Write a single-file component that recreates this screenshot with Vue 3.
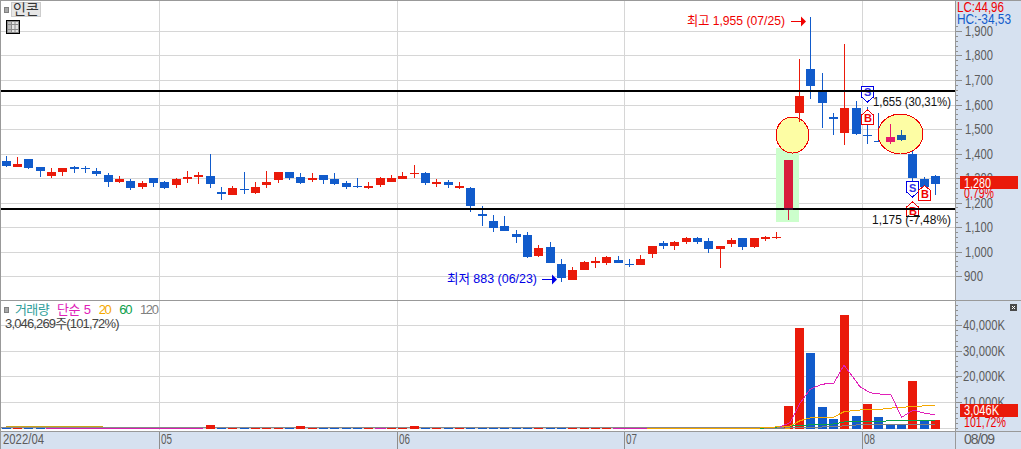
<script setup>
const B = '#115bcb'
const R = '#ea1a0a'
// each candle: wick top, wick bottom, body top, body bottom (px), colour
const raw = [
  [156,167,161,166,B],[157,167,164,167,R],[159,169,159,168,B],[167,177,167,171,B],[168,178,172,176,R],
  [168,176,168,172,R],[166,173,167,169,B],[166,173,168,169,B],[168,176,171,174,B],[173,187,175,182,B],
  [176,183,179,182,R],[179,190,181,188,B],[181,189,183,187,R],[178,187,178,183,B],[181,189,182,188,B],
  [178,188,179,185,R],[171,183,177,179,R],[172,184,175,177,R],[154,188,176,184,B],[187,200,192,194,B],
  [186,195,188,195,R],[172,194,189,190,B],[182,194,187,193,R],[171,188,182,185,R],[172,183,172,180,R],
  [172,180,172,178,B],[173,184,177,183,B],[173,182,178,180,R],[175,184,175,180,B],[173,185,179,184,B],
  [181,189,183,187,B],[178,188,186,187,B],[182,189,186,188,R],[177,187,178,185,R],[175,182,178,182,R],
  [172,179,176,179,R],[165,178,173,174,R],[172,185,173,183,B],[179,187,182,184,R],[180,188,182,185,B],
  [182,189,186,188,R],[187,212,188,206,B],[206,226,214,216,B],[215,232,221,228,B],[216,231,226,231,B],
  [230,243,234,237,B],[232,258,235,257,B],[245,257,248,256,R],[242,263,247,263,B],[259,282,264,278,B],
  [267,280,270,280,R],[261,270,262,270,R],[257,268,261,263,R],[256,265,257,263,R],[256,263,260,263,B],
  [259,267,264,265,B],[255,265,259,265,R],[246,258,246,254,R],[241,249,243,246,B],[241,250,242,246,R],
  [237,244,238,242,R],[237,244,238,242,B],[238,253,241,249,B],[246,268,246,249,R],[238,247,240,244,R],
  [238,250,238,247,B],[238,248,238,247,R],[236,241,237,239,R],[232,239,237,238,R],[160,220,160,209,'#d81b3c'],
  [59,122,96,113,R],[17,99,69,86,B],[73,128,92,103,B],[113,135,117,119,B],[44,145,108,133,R],
  [101,135,108,134,B],[107,144,135,136,B],[113,142,141,142,B],[124,144,137,142,'#e6186c'],[130,141,135,140,'#155fae'],
  [145,198,154,178,B],[177,190,179,187,B],[175,195,176,184,B],
]
const candles = raw.map((c, i) => ({ id: i, x: Math.floor(6.3 + (i * 34) / 3), t: c[0], b: c[1], bt: c[2], bb: c[3], c: c[4] }))
const overCircle = [70, 78, 79]
const baseCandles = candles.filter(c => !overCircle.includes(c.id))
const topCandles = candles.filter(c => overCircle.includes(c.id))

const priceGrid = [31, 55, 80, 105, 129, 154, 178, 203, 227, 252, 276]
const verticals = [159, 397, 624, 862]
const priceLabels = [
  ['1,900', 31], ['1,800', 55], ['1,700', 80], ['1,600', 105], ['1,500', 129], ['1,400', 154],
  ['1,300', 178], ['1,200', 203], ['1,100', 227], ['1,000', 252],
].map(([t, y]) => ({ t, y, w: 28, x: 965 }))
priceLabels.push({ t: '900', y: 276, w: 19, x: 964 })
const priceTicks = Array.from({ length: 52 }, (_, i) => Math.round(276 - i * 4.9))
const volGrid = [325, 351, 376, 402]
const volLabels = [['40,000K', 325], ['30,000K', 351], ['20,000K', 376], ['10,000K', 402]]
const volTicks = Array.from({ length: 25 }, (_, i) => Math.round(428 - i * 5.14))

const bigVol = { 69: [406,R], 70: [328,R], 71: [353,B], 72: [407,B], 73: [419,B], 74: [315,R], 75: [416,B], 76: [404,R], 77: [417,B], 78: [424,B], 79: [424,B], 80: [381,R], 81: [421,B], 82: [420,R], 18: [425,R], 36: [426,R], 26: [426,R] }
const volBars = candles.map(c => {
  const v = bigVol[c.id]
  return { id: c.id, x: c.x - 4, top: v ? v[0] : 428, c: v ? v[1] : (c.c === B ? B : R) }
})

const toPts = a => a.map(([x, y]) => `${(760 + x / 3).toFixed(1)},${(300 + y / 3).toFixed(1)}`).join(' ')
const ma5 = toPts([[60,380],[90,368],[120,310],[150,268],[185,253],[222,249],[252,195],[300,260],[330,278],[360,282],[393,285],[425,352],[460,330],[495,340],[525,344]])
const ma20 = toPts([[0,384],[90,378],[120,362],[150,354],[220,352],[252,335],[300,330],[360,328],[395,324],[450,320],[525,316]])
const ma60 = toPts([[0,385],[120,376],[220,372],[252,366],[330,364],[430,362],[525,361]])
const ma120 = toPts([[0,386],[220,380],[300,374],[525,373]])

const dates = [['2022/04', 3, 41], ['05', 161, 11], ['06', 399, 11], ['07', 626, 11], ['08', 864, 11]]
const dateSeps = [159, 397, 624, 862]
</script>

<template>
  <div class="screen">
    <div class="cell plot">
      <svg class="fill" viewBox="1 1 954 299" width="954" height="299">
        <rect v-for="y in priceGrid" :key="'g' + y" x="0" :y="y" width="955" height="1" class="grid" />
        <rect v-for="x in verticals" :key="'v' + x" :x="x" y="0" width="1" height="300" class="grid" />
        <rect x="776" y="148" width="23" height="74" fill="#ccffcc" />
        <g v-for="c in baseCandles" :key="c.id" :fill="c.c">
          <rect :x="c.x" :y="c.t" width="1" :height="c.b - c.t" />
          <rect :x="c.x - 4" :y="c.bt" width="9" :height="c.bb - c.bt" />
        </g>
        <ellipse cx="792.5" cy="135" rx="16.5" ry="18" class="spot" />
        <ellipse cx="900.5" cy="134" rx="22.5" ry="20" class="spot" />
        <g v-for="c in topCandles" :key="c.id" :fill="c.c">
          <rect :x="c.x" :y="c.t" width="1" :height="c.b - c.t" />
          <rect :x="c.x - 4" :y="c.bt" width="9" :height="c.bb - c.bt" />
        </g>

        <polygon points="861.5,86.5 873.5,86.5 873.5,97 867.5,102 861.5,97" class="mk-s" />
        <text x="864" y="96" class="mk-t sell">S</text>
        <polygon points="867.5,110 873.5,115 873.5,124 861.5,124 861.5,115" class="mk-b" />
        <text x="864" y="122" class="mk-t buy">B</text>
        <polygon points="906.5,181.5 918.5,181.5 918.5,192 912.5,197 906.5,192" class="mk-s" />
        <text x="909" y="192" class="mk-t sell">S</text>
        <polygon points="924.5,185.5 930.5,190.5 930.5,200 918.5,200 918.5,190.5" class="mk-b" />
        <text x="921" y="198" class="mk-t buy">B</text>
        <polygon points="912.5,202 918.5,207 918.5,216 906.5,216 906.5,207" class="mk-b" />
        <text x="909" y="215" class="mk-t buy">B</text>
        <rect x="906" y="216" width="14" height="1" fill="#111" />

        <rect x="0" y="90" width="955" height="2" fill="#000" />
        <rect x="0" y="208" width="955" height="2" fill="#000" />
        <rect x="784" y="208" width="9" height="2" fill="#3b1030" />

        <text x="687" y="25" textLength="98" lengthAdjust="spacingAndGlyphs" class="note red">최고 1,955 (07/25)</text>
        <path d="M791 21.5H802" stroke="#f00000" stroke-width="1" />
        <polygon points="801,16.5 806,21.5 801,26.5" fill="#f00000" />
        <text x="447" y="283" textLength="90" lengthAdjust="spacingAndGlyphs" class="note blue">최저 883 (06/23)</text>
        <path d="M542 279.5H553" stroke="#0000e6" stroke-width="1" />
        <polygon points="552,274.5 557,279.5 552,284.5" fill="#0000e6" />
        <text x="873" y="106" textLength="78" lengthAdjust="spacingAndGlyphs" class="note dark">1,655 (30,31%)</text>
        <text x="872" y="224" textLength="79" lengthAdjust="spacingAndGlyphs" class="note dark">1,175 (-7,48%)</text>
      </svg>
      <div class="symbol">
        <div class="symbol-row">
          <i class="chip"></i>
          <span class="name">인콘</span>
        </div>
        <div class="table-btn">
          <svg viewBox="0 0 12 12" width="12" height="12">
            <rect x="0.5" y="0.5" width="11" height="11" fill="#e4e4e4" stroke="#8c8c8c" />
            <rect x="1" y="1" width="3" height="10" fill="#bdbdbd" />
            <path d="M4.5 1V11M8 1V11M1 3.5H11M1 8.5H11" stroke="#8c8c8c" fill="none" />
          </svg>
        </div>
      </div>
    </div>

    <div class="cell axis">
      <svg class="fill" viewBox="956 1 65 299" width="65" height="299">
        <g v-for="y in priceTicks" :key="y">
          <rect x="955" :y="y" width="3" height="1" class="tick" />
        </g>
        <rect v-for="l in priceLabels" :key="'t' + l.y" x="955" :y="l.y" width="7" height="1" class="tick" />
        <text v-for="l in priceLabels" :key="l.t" :x="l.x" :y="l.y + 5" :textLength="l.w" lengthAdjust="spacingAndGlyphs" class="ax">{{ l.t }}</text>
        <rect x="956" y="0" width="65" height="26" fill="#d6e1f0" />
        <text x="957" y="12" textLength="47" lengthAdjust="spacingAndGlyphs" class="ax red-t">LC:44,96</text>
        <text x="957" y="24" textLength="54" lengthAdjust="spacingAndGlyphs" class="ax blue-t">HC:-34,53</text>
        <rect x="960" y="176" width="58" height="13" fill="#ea1a0a" />
        <text x="964" y="187.5" textLength="27" lengthAdjust="spacingAndGlyphs" class="ax white-t">1,280</text>
        <text x="964" y="198" textLength="30" lengthAdjust="spacingAndGlyphs" class="ax red-t">0,79%</text>
      </svg>
    </div>

    <div class="cell plot">
      <svg class="fill" viewBox="1 301 954 129" width="954" height="129">
        <rect v-for="y in volGrid" :key="'vg' + y" x="0" :y="y" width="955" height="1" class="grid" />
        <rect v-for="x in verticals" :key="'vv' + x" :x="x" y="300" width="1" height="130" class="grid" />
        <rect x="0" y="428" width="955" height="1" class="grid" />
        <rect x="0" y="427" width="790" height="1" fill="#888" />
        <rect v-for="b in volBars" :key="'b' + b.id" :x="b.x" :y="b.top" width="9" :height="429 - b.top" :fill="b.c" />
        <rect x="6" y="426" width="97" height="1" fill="#c9a21a" />
        <rect x="46" y="428" width="157" height="1" fill="#d81fb0" />
        <rect x="375" y="428" width="11" height="1" fill="#d81fb0" />
        <rect x="613" y="428" width="34" height="1" fill="#d81fb0" />
        <rect x="647" y="428" width="143" height="1" fill="#f4a800" />
        <polyline :points="ma120" class="ma" stroke="#808080" />
        <polyline :points="ma60" class="ma" stroke="#0ca04a" />
        <polyline :points="ma20" class="ma" stroke="#f4a800" />
        <polyline :points="ma5" class="ma" stroke="#e020b8" />
      </svg>
      <div class="legend">
        <div class="legend-row">
          <i class="chip"></i>
          <span class="teal">거래량</span>
          <span class="magenta gap-a">단순</span>
          <span class="magenta num gap-b">5</span>
          <span class="orange num gap-c">20</span>
          <span class="green num gap-c">60</span>
          <span class="grey num gap-c">120</span>
        </div>
        <div class="vol-now">3,046,269주(101,72%)</div>
      </div>
    </div>

    <div class="cell axis">
      <svg class="fill" viewBox="956 301 65 129" width="65" height="129">
        <rect v-for="y in volTicks" :key="'vt' + y" x="955" :y="y" width="3" height="1" class="tick" />
        <rect v-for="y in volGrid" :key="'vm' + y" x="955" :y="y" width="7" height="1" class="tick" />
        <text v-for="l in volLabels" :key="l[0]" x="963" :y="l[1] + 5" textLength="42" lengthAdjust="spacingAndGlyphs" class="ax">{{ l[0] }}</text>
        <rect x="960" y="404" width="58" height="13" fill="#ea1a0a" />
        <text x="964" y="415" textLength="35" lengthAdjust="spacingAndGlyphs" class="ax white-t">3,046K</text>
        <text x="964" y="427" textLength="42" lengthAdjust="spacingAndGlyphs" class="ax red-t">101,72%</text>
      </svg>
      <div class="close">
        <svg viewBox="0 0 7 7" width="7" height="7"><path d="M2 2L5 5M5 2L2 5" stroke="#fff" stroke-width="1" /></svg>
      </div>
    </div>

    <div class="cell dates">
      <svg class="fill" viewBox="1 431 954 17" width="954" height="17">
        <rect v-for="x in dateSeps" :key="'ds' + x" :x="x" y="430" width="1" height="18" class="tick" />
        <text v-for="d in dates" :key="d[0]" :x="d[1]" y="443" :textLength="d[2]" lengthAdjust="spacingAndGlyphs" class="ax">{{ d[0] }}</text>
      </svg>
    </div>
    <div class="cell dates end">
      <span class="end-date">08/09</span>
    </div>
  </div>
</template>

<style scoped>
.screen {
  width: 1021px;
  height: 449px;
  box-sizing: border-box;
  border-top: 1px solid #999;
  display: grid;
  grid-template-columns: 955px 66px;
  grid-template-rows: 299px 131px 19px;
  background: #fff;
  font-family: "Liberation Sans", "Noto Sans CJK KR", sans-serif;
  overflow: hidden;
}
.cell {
  position: relative;
  box-sizing: border-box;
  min-width: 0;
  min-height: 0;
}
.plot {
  border-left: 1px solid #999;
  background: #fff;
}
.axis {
  border-left: 1px solid #999;
  background: #d6e1f0;
}
.cell:nth-child(3),
.cell:nth-child(4) {
  border-top: 1px solid #999;
}
.dates {
  border-top: 1px solid #999;
  border-bottom: 1px solid #999;
  border-left: 1px solid #999;
  background: #d6e1f0;
}
.fill {
  display: block;
}
.grid {
  fill: #d6d6d6;
}
.tick {
  fill: #8e8e8e;
}
.spot {
  fill: #fdfda4;
  stroke: #f00000;
  stroke-width: 1;
  shape-rendering: crispEdges;
}
.mk-s {
  fill: #fff;
  stroke: #0000e6;
  stroke-width: 1;
  shape-rendering: crispEdges;
}
.mk-b {
  fill: #fff;
  stroke: #f00000;
  stroke-width: 1;
  shape-rendering: crispEdges;
}
.mk-t {
  font-size: 11px;
  font-weight: 700;
}
.sell {
  fill: #3030e6;
}
.buy {
  fill: #f00000;
}
.note {
  font-size: 13px;
}
.red {
  fill: #f00000;
}
.blue {
  fill: #0000e6;
}
.dark {
  fill: #111;
}
.ax {
  font-size: 14px;
  fill: #5c5c5c;
}
.red-t {
  fill: #f00000;
}
.blue-t {
  fill: #115bcb;
}
.white-t {
  fill: #fff;
}
.ma {
  fill: none;
  stroke-width: 1;
  shape-rendering: crispEdges;
}
.symbol {
  position: absolute;
  left: 3px;
  top: 1px;
  display: flex;
  flex-direction: column;
  gap: 3px;
}
.symbol-row {
  display: flex;
  align-items: center;
  gap: 2px;
}
.chip {
  display: block;
  background: #a8a8a8;
  border: 1px solid #808080;
  box-sizing: content-box;
  width: 3px;
  height: 4px;
}
.name {
  box-sizing: border-box;
  width: 30px;
  height: 15px;
  line-height: 13px;
  text-align: center;
  font-size: 14px;
  color: #333;
  background: #e6e6e6;
  border: 1px solid #ccc;
}
.table-btn {
  width: 14px;
  height: 14px;
  box-sizing: border-box;
  margin-left: 2px;
  border: 1px solid #000;
  display: flex;
  background: #fff;
}
.table-btn svg {
  display: block;
}
.legend {
  position: absolute;
  left: 3px;
  top: 2px;
  font-size: 13px;
  line-height: 14px;
}
.legend-row {
  display: flex;
  align-items: center;
  letter-spacing: -0.6px;
}
.legend-row .chip {
  margin-right: 6px;
}
.num {
  letter-spacing: -1.4px;
}
.teal {
  color: #2e9d9a;
}
.magenta {
  color: #e020b8;
}
.orange {
  color: #f4a800;
}
.green {
  color: #0ca04a;
}
.grey {
  color: #808080;
}
.gap-a {
  margin-left: 8px;
}
.gap-b {
  margin-left: 4px;
}
.gap-c {
  margin-left: 9px;
}
.vol-now {
  margin-left: 1px;
  color: #444;
  letter-spacing: -0.85px;
}
.close {
  position: absolute;
  right: 4px;
  top: 3px;
  width: 7px;
  height: 7px;
  background: #4a4a4a;
  display: flex;
}
.end {
  display: flex;
  align-items: center;
  padding-left: 8px;
  padding-bottom: 3px;
}
.end-date {
  font-size: 14px;
  line-height: 16px;
  letter-spacing: -1px;
  color: #5c5c5c;
}
</style>
